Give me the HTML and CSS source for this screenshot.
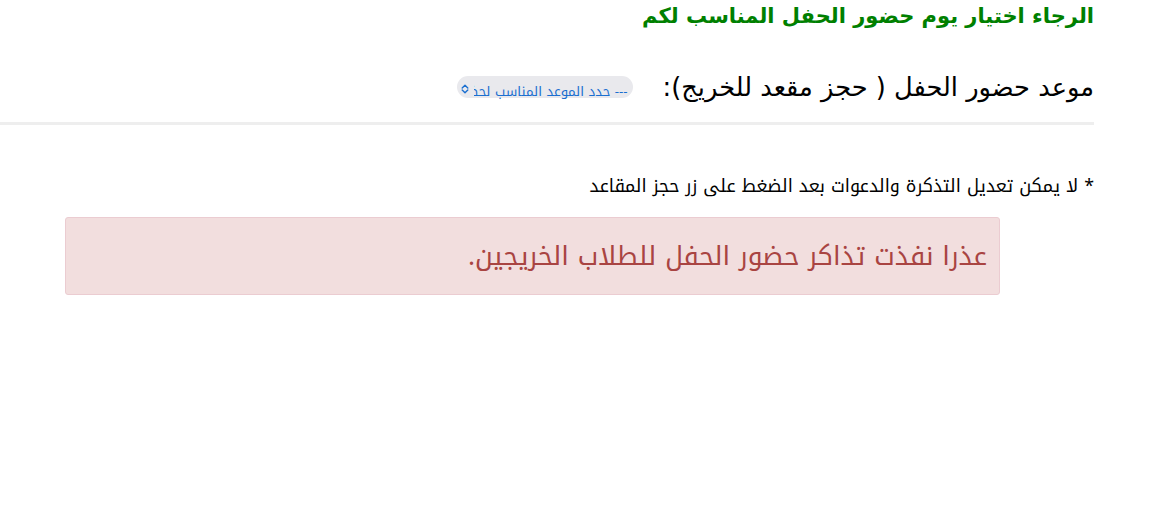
FILE: index.html
```html
<!DOCTYPE html>
<html lang="ar" dir="rtl">
<head>
<meta charset="utf-8">
<link rel="stylesheet" href="styles.css">
</head>
<body>
<div class="page">
  <h3 class="title">الرجاء اختيار يوم حضور الحفل المناسب لكم</h3>
  <div class="row">
    <label class="label">موعد حضور الحفل ( حجز مقعد للخريج):</label>
    <div class="select">
      <span class="select-text">--- حدد الموعد المناسب لحضور الحفل ---</span>
      <svg class="caret" width="8" height="10" viewBox="0 0 8 10"><path d="M1.2 4 L4 1.3 L6.8 4 M1.2 6 L4 8.7 L6.8 6" fill="none" stroke="#1a6fd0" stroke-width="1.4" stroke-linecap="round" stroke-linejoin="round"/></svg>
    </div>
  </div>
  <hr class="rule">
  <p class="note">* لا يمكن تعديل التذكرة والدعوات بعد الضغط على زر حجز المقاعد</p>
  <div class="alert">عذرا نفذت تذاكر حضور الحفل للطلاب الخريجين.</div>
</div>
</body>
</html>
```
FILE: styles.css
```css
html, body { margin: 0; padding: 0; background: #fff; }
body { font-family: "DejaVu Sans", sans-serif; color: #000; }
.page { width: 1094px; margin: 0 76px 0 0; }
.title { margin: 0; padding-top: 3px; font-size: 21px; font-weight: bold; color: #008000; line-height: 26px; }
.row { display: flex; align-items: center; gap: 30px; margin-top: 41px; height: 34px; }
.label { font-size: 25.7px; line-height: 34px; }
.select { display: flex; align-items: center; gap: 5px; background: #e9e9ed; border-radius: 11px; height: 22px; width: 176px; flex: none; box-sizing: border-box; padding: 0 5px 0 4px; }
.select-text { font-family: "Noto Kufi Arabic", "DejaVu Sans", sans-serif; font-size: 13.2px; line-height: 22px; height: 22px; box-sizing: border-box; padding-top: 5px; align-self: flex-start; color: #1a6fd0; white-space: nowrap; overflow-x: clip; overflow-y: visible; flex: 1 1 0; min-width: 0; }
.caret { flex: none; display: block; align-self: center; margin-top: 4px; }
.rule { margin: 18px 0 0 0; border: 0; height: 3px; background: #eee; }
.note { font-family: "Noto Kufi Arabic", "DejaVu Sans", sans-serif; font-size: 17.8px; margin: 49px 0 0 0; line-height: 24px; }
.alert { font-family: "Noto Kufi Arabic", "DejaVu Sans", sans-serif; margin: 19px 94px 0 65px; background: #f2dede; border: 1px solid #ebccd1; border-radius: 3px; color: #a94442; font-size: 26.3px; height: 78px; box-sizing: border-box; padding: 0 12px; display: flex; align-items: center; }
```
